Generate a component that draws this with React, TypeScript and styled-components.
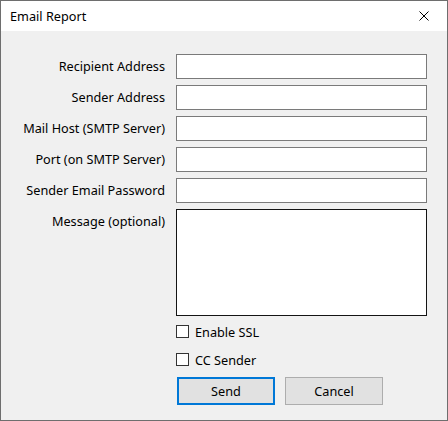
import React, { useState } from 'react'
import styled, { createGlobalStyle } from 'styled-components'

const GlobalStyle = createGlobalStyle`
  html, body {
    margin: 0;
    padding: 0;
    background: #ffffff;
  }
  * {
    box-sizing: border-box;
  }
`

const Window = styled.div`
  width: 448px;
  height: 421px;
  border: 1px solid #6e6e6e;
  background: #f0f0f0;
  display: flex;
  flex-direction: column;
  font-family: 'Noto Sans', 'Open Sans', sans-serif;
  font-size: 12.7px;
  color: #000;
`

const TitleBar = styled.div`
  height: 30px;
  background: #fff;
  display: flex;
  align-items: center;
  justify-content: space-between;
  padding: 0 0 0 9px;
`

const Title = styled.span`
  font-size: 12.7px;
  color: #000;
`

const CloseButton = styled.button`
  width: 46px;
  height: 30px;
  border: none;
  background: transparent;
  display: flex;
  align-items: center;
  justify-content: center;
  padding: 0;
  cursor: pointer;
`

const Body = styled.div`
  padding-top: 23px;
  display: grid;
  grid-template-columns: 164px 251px;
  column-gap: 11px;
  row-gap: 6px;
  align-content: start;
`

const Label = styled.label`
  height: 25px;
  line-height: 25px;
  text-align: right;
  white-space: nowrap;
  align-self: start;
`

const TextInput = styled.input`
  height: 25px;
  width: 251px;
  border: 1px solid #7a7a7a;
  background: #fff;
  margin: 0;
  padding: 0 3px;
  font: inherit;
  outline: none;
`

const MessageArea = styled.textarea`
  height: 107px;
  width: 251px;
  border: 1px solid #141414;
  background: #fff;
  margin: 0;
  padding: 2px 3px;
  font: inherit;
  resize: none;
  outline: none;
`

const Options = styled.div`
  grid-column: 2;
  padding-top: 3px;
  display: flex;
  flex-direction: column;
`

const CheckRow = styled.label<{ $gap: number }>`
  height: 13px;
  display: flex;
  align-items: center;
  gap: 6px;
  margin-bottom: ${(p) => p.$gap}px;
  cursor: pointer;
`

const CheckBox = styled.span`
  width: 13px;
  height: 13px;
  border: 1px solid #333;
  background: #fff;
  display: flex;
  align-items: center;
  justify-content: center;
  flex-shrink: 0;
`

const ButtonRow = styled.div`
  display: flex;
  gap: 10px;
  padding-left: 1px;
`

const Button = styled.button<{ $primary?: boolean }>`
  width: 98px;
  height: 28px;
  background: #e1e1e1;
  border: ${(p) => (p.$primary ? '2px solid #0078d7' : '1px solid #adadad')};
  font: inherit;
  color: #000;
  padding: 0;
  cursor: pointer;
`

const fields = [
  'Recipient Address',
  'Sender Address',
  'Mail Host (SMTP Server)',
  'Port (on SMTP Server)',
  'Sender Email Password',
]

function Check({ label, gap }: { label: string; gap: number }) {
  const [checked, setChecked] = useState(false)
  return (
    <CheckRow $gap={gap} onClick={() => setChecked(!checked)}>
      <CheckBox>
        {checked && (
          <svg width="9" height="9" viewBox="0 0 9 9">
            <path d="M1 4.5 L3.5 7 L8 1.5" fill="none" stroke="#000" strokeWidth="1.3" />
          </svg>
        )}
      </CheckBox>
      <span>{label}</span>
    </CheckRow>
  )
}

function App() {
  return (
    <Window>
      <GlobalStyle />
      <TitleBar>
        <Title>Email Report</Title>
        <CloseButton aria-label="Close">
          <svg width="10" height="10" viewBox="0 0 10 10">
            <path d="M0.5 0.5 L9.5 9.5 M9.5 0.5 L0.5 9.5" stroke="#000" strokeWidth="1" />
          </svg>
        </CloseButton>
      </TitleBar>
      <Body>
        {fields.map((f) => (
          <React.Fragment key={f}>
            <Label>{f}</Label>
            <TextInput type={f.includes('Password') ? 'password' : 'text'} />
          </React.Fragment>
        ))}
        <Label>Message (optional)</Label>
        <MessageArea />
        <Options>
          <Check label="Enable SSL" gap={15} />
          <Check label="CC Sender" gap={11} />
          <ButtonRow>
            <Button $primary>Send</Button>
            <Button>Cancel</Button>
          </ButtonRow>
        </Options>
      </Body>
    </Window>
  )
}

export default App
